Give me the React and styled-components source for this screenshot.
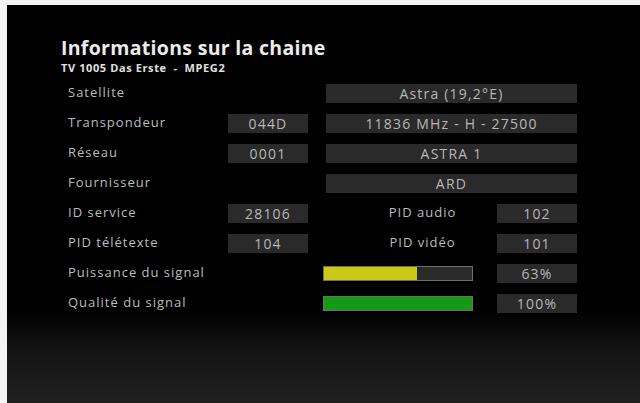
import styled, { createGlobalStyle } from "styled-components";

const GlobalStyle = createGlobalStyle`
  html, body {
    margin: 0;
    padding: 0;
    background: #f4f4f4;
    overflow: hidden;
  }
  body {
    font-family: "Open Sans", "DejaVu Sans", sans-serif;
  }
`;

const Screen = styled.div`
  margin: 5px 0 0 7px;
  width: 640px;
  height: 400px;
  box-sizing: border-box;
  padding: 32px 0 0 54px;
  background: linear-gradient(
    to bottom,
    #000 0%,
    #000 76%,
    #131313 86%,
    #212121 100%
  );
  overflow: hidden;
`;

const Title = styled.h1`
  margin: 0;
  font-size: 19.5px;
  font-weight: 700;
  color: #ececec;
  line-height: 22px;
  letter-spacing: 0.3px;
`;

const Subtitle = styled.div`
  margin-top: 2px;
  font-size: 11px;
  font-weight: 700;
  color: #e0e0e0;
  line-height: 13px;
  letter-spacing: 0.6px;
  white-space: pre;
`;

const Grid = styled.div`
  margin: 10px 0 0 7px;
  display: grid;
  grid-template-columns: 142px 80px 153px 80px;
  grid-auto-rows: 19px;
  column-gap: 18px;
  row-gap: 11px;
  align-items: center;
`;

const Label = styled.div`
  grid-column: 1;
  font-size: 13px;
  color: #bdbdbd;
  letter-spacing: 1px;
  white-space: nowrap;
  transform: translateY(-2px);
`;

const Box = styled.div`
  grid-column: ${(p) => p.$col};
  grid-column-end: span ${(p) => p.$span || 1};
  height: 19px;
  background: #2a2a2a;
  color: #b8b8b8;
  font-size: 14px;
  letter-spacing: 1.2px;
  line-height: 19px;
  text-align: center;
  white-space: nowrap;
`;

const SubLabel = styled.div`
  grid-column: 3;
  font-size: 13px;
  color: #bdbdbd;
  letter-spacing: 1px;
  text-align: center;
  padding-left: 40px;
  transform: translateY(-2px);
`;

const Bar = styled.div`
  grid-column: 3;
  margin-left: -3px;
  width: 150px;
  height: 15px;
  box-sizing: border-box;
  border: 1px solid #6e6e6e;
  background: #2b2b2b;
`;

const Fill = styled.div`
  height: 100%;
  background: ${(p) => p.$color};
`;

const rows = [
  { label: "Satellite", wide: "Astra (19,2°E)" },
  { label: "Transpondeur", code: "044D", wide: "11836 MHz - H - 27500" },
  { label: "Réseau", code: "0001", wide: "ASTRA 1" },
  { label: "Fournisseur", wide: "ARD" },
  { label: "ID service", code: "28106", sub: "PID audio", subVal: "102" },
  { label: "PID télétexte", code: "104", sub: "PID vidéo", subVal: "101" },
];

const signals = [
  { label: "Puissance du signal", value: 63, color: "#c9c916" },
  { label: "Qualité du signal", value: 100, color: "#159a15" },
];

export default function App() {
  return (
    <>
      <GlobalStyle />
      <Screen>
        <Title>Informations sur la chaine</Title>
        <Subtitle>TV 1005 Das Erste  -  MPEG2</Subtitle>
        <Grid>
          {rows.map((r) => (
            <>
              <Label key={r.label}>{r.label}</Label>
              {r.code && <Box $col={2}>{r.code}</Box>}
              {r.wide && (
                <Box $col={3} $span={2}>
                  {r.wide}
                </Box>
              )}
              {r.sub && <SubLabel>{r.sub}</SubLabel>}
              {r.subVal && <Box $col={4}>{r.subVal}</Box>}
            </>
          ))}
          {signals.map((s) => (
            <>
              <Label key={s.label}>{s.label}</Label>
              <Bar>
                <Fill $color={s.color} style={{ width: `${s.value}%` }} />
              </Bar>
              <Box $col={4}>{s.value}%</Box>
            </>
          ))}
        </Grid>
      </Screen>
    </>
  );
}
